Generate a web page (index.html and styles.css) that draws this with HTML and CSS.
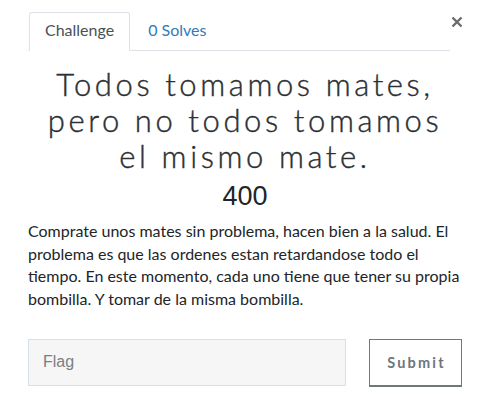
FILE: index.html
```html
<!DOCTYPE html>
<html>
<head>
<meta charset="utf-8">
<link rel="stylesheet" href="styles.css">
</head>
<body>
<div class="modal">
  <div class="header">
    <ul class="tabs">
      <li class="tab active">Challenge</li>
      <li class="tab link">0 Solves</li>
    </ul>
    <button class="close" aria-label="Close">
      <svg width="12" height="12" viewBox="0 0 12 12"><path d="M1.5 1.5 L10.5 10.5 M10.5 1.5 L1.5 10.5" stroke="#6b6b6b" stroke-width="2.4" stroke-linecap="butt"/></svg>
    </button>
  </div>
  <h3 class="title">Todos tomamos mates,<br>pero no todos tomamos<br>el mismo mate.</h3>
  <h4 class="value">400</h4>
  <p class="desc">Comprate unos mates sin problema, hacen bien a la salud. El problema es que las ordenes estan retardandose todo el tiempo. En este momento, cada uno tiene que tener su propia bombilla. Y tomar de la misma bombilla.</p>
  <form class="submit-row">
    <input class="flag" type="text" placeholder="Flag">
    <button class="submit" type="button">Submit</button>
  </form>
</div>
</body>
</html>
```

FILE: styles.css
```css
html, body {
  margin: 0;
  padding: 0;
  background: #ffffff;
}
body {
  font-family: Lato, "Liberation Sans", sans-serif;
  color: #212529;
}
.modal {
  padding: 12px 32px 0 28px;
}
.header {
  display: flex;
  align-items: flex-start;
}
.tabs {
  flex: 1;
  display: flex;
  list-style: none;
  margin: 0;
  padding: 0 0 0 1px;
  border-bottom: 1px solid #dee2e6;
}
.tab {
  font-size: 16px;
  line-height: 24px;
  padding: 5px 15px 8px 15px;
  border: 1px solid transparent;
  margin-bottom: -1px;
  border-radius: 3px 3px 0 0;
}
.tab.active {
  color: #495057;
  border-color: #dee2e6 #dee2e6 #ffffff;
  background: #fff;
}
.tab.link {
  color: #337ab7;
  padding-left: 17px;
}
.close {
  border: 0;
  background: none;
  padding: 0;
  margin: 4px -1px 0 1px;
  width: 12px;
  height: 12px;
  display: flex;
}
.title {
  margin: 15px 0 0 0;
  text-align: center;
  font-family: Lato, sans-serif;
  font-weight: 300;
  font-size: 31px;
  line-height: 36px;
  letter-spacing: 3.6px;
  -webkit-text-stroke: 0.4px #2b2f33;
  color: #2b2f33;
}
.value {
  margin: 7px 0 0 0;
  text-align: center;
  font-family: "Liberation Sans", Arial, sans-serif;
  font-weight: 400;
  font-size: 27px;
  line-height: 30px;
  color: #212529;
}
.desc {
  margin: 9px 0 0 0;
  font-size: 16px;
  line-height: 22.7px;
  color: #212529;
}
.submit-row {
  display: flex;
  gap: 23px;
  margin-top: 28px;
}
.flag {
  flex: 1;
  height: 47px;
  box-sizing: border-box;
  border: 1px solid #d7e0e6;
  background: #f6f6f6;
  padding: 0 14px;
  font-family: "Liberation Sans", Arial, sans-serif;
  font-size: 16px;
  color: #333;
  outline: none;
}
.flag::placeholder {
  color: #7c7f82;
}
.submit {
  width: 93px;
  height: 48px;
  box-sizing: border-box;
  border: 1px solid #6e7a7a;
  border-bottom-width: 2px;
  background: #fff;
  font-family: Lato, sans-serif;
  font-weight: 700;
  font-size: 14.5px;
  letter-spacing: 2.2px;
  color: #6c757d;
  padding: 0 0 0 2px;
}
```
